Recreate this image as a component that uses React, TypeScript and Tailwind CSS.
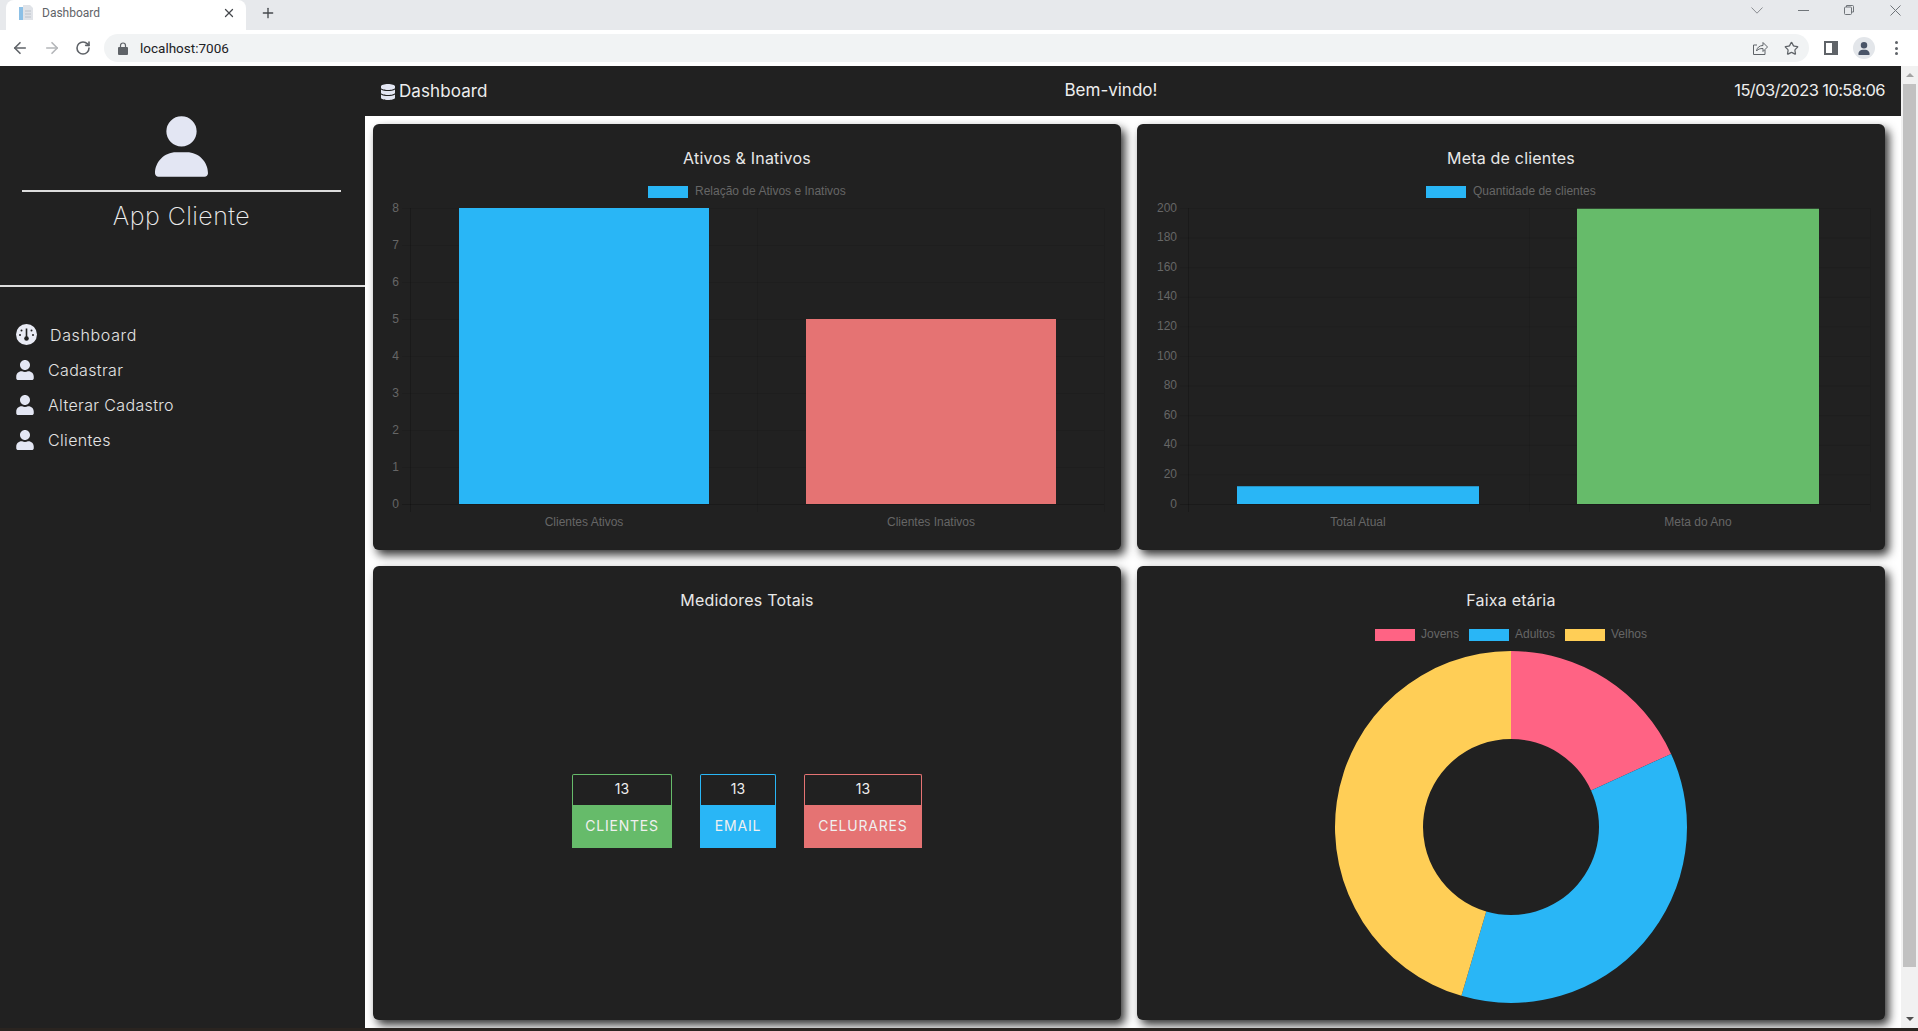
import React from 'react';
import { FaUser, FaDatabase } from 'react-icons/fa';
import { FaUser as FaUser6 } from 'react-icons/fa6';
import { ArrowLeft, ArrowRight, RotateCw, Star, X, Plus } from 'lucide-react';

const BLUE = '#29b6f6';
const RED = '#e57373';
const GREEN = '#66bb6a';
const GRID = 'rgba(0,0,0,0.08)';
const AXIS = 'rgba(0,0,0,0.2)';
const LABEL = '#666666';
const CHART_FONT = '"Liberation Sans", Arial, sans-serif';

interface BarChartProps {
  plotLeft: number;
  plotRight: number;
  ticks: number[];
  max: number;
  legend: string;
  legendX: number;
  bars: { label: string; value: number; color: string; x: number; w: number }[];
}

// same look as the chart.js bars of the app
const BarChart: React.FC<BarChartProps> = ({ plotLeft, plotRight, ticks, max, legend, legendX, bars }) => {
  const top = 32;
  const bottom = 328;
  const mid = (plotLeft + plotRight) / 2;
  const yOf = (v: number) => bottom - (v / max) * (bottom - top);

  return (
    <svg viewBox="0 0 748 374" className="block w-full h-[374px]" fontFamily={CHART_FONT} fontSize={12}>
      <rect x={legendX} y={10} width={40} height={12} fill={BLUE} />
      <text x={legendX + 47} y={19} fill={LABEL}>{legend}</text>

      {ticks.map(t => (
        <g key={t}>
          <line x1={plotLeft - 8} x2={plotRight} y1={yOf(t) + 0.5} y2={yOf(t) + 0.5} stroke={t === 0 ? AXIS : GRID} />
          <text x={plotLeft - 11} y={yOf(t) + 3.5} textAnchor="end" fill={LABEL}>{t}</text>
        </g>
      ))}
      {[plotLeft, mid, plotRight].map(x => (
        <line key={x} x1={x + 0.5} x2={x + 0.5} y1={top} y2={bottom + 8} stroke={x === plotLeft ? AXIS : GRID} />
      ))}

      {bars.map(b => (
        <g key={b.label}>
          <rect x={b.x} y={yOf(b.value)} width={b.w} height={bottom - yOf(b.value)} fill={b.color} />
          <text x={b.x + b.w / 2} y={349.5} textAnchor="middle" fill={LABEL}>{b.label}</text>
        </g>
      ))}
    </svg>
  );
};

const polar = (cx: number, cy: number, r: number, deg: number) => {
  const a = ((deg - 90) * Math.PI) / 180;
  return [cx + r * Math.cos(a), cy + r * Math.sin(a)];
};

const slicePath = (cx: number, cy: number, r1: number, r2: number, from: number, to: number) => {
  const [x1, y1] = polar(cx, cy, r2, from);
  const [x2, y2] = polar(cx, cy, r2, to);
  const [x3, y3] = polar(cx, cy, r1, to);
  const [x4, y4] = polar(cx, cy, r1, from);
  const large = to - from > 180 ? 1 : 0;
  return `M${x1} ${y1}A${r2} ${r2} 0 ${large} 1 ${x2} ${y2}L${x3} ${y3}A${r1} ${r1} 0 ${large} 0 ${x4} ${y4}Z`;
};

const AGE_GROUPS = [
  { label: 'Jovens', value: 2, color: '#ff6384', boxX: 238 },
  { label: 'Adultos', value: 4, color: '#29b6f6', boxX: 332 },
  { label: 'Velhos', value: 5, color: '#ffce56', boxX: 428 },
];

const DonutChart: React.FC = () => {
  const total = AGE_GROUPS.reduce((s, g) => s + g.value, 0);
  let angle = 0;
  return (
    <svg viewBox="0 0 748 402" className="block w-full h-[402px]" fontFamily={CHART_FONT} fontSize={12}>
      {AGE_GROUPS.map(g => (
        <g key={g.label}>
          <rect x={g.boxX} y={11} width={40} height={12} fill={g.color} />
          <text x={g.boxX + 46} y={20} fill={LABEL}>{g.label}</text>
        </g>
      ))}
      {AGE_GROUPS.map(g => {
        const from = angle;
        angle += (g.value / total) * 360;
        return <path key={g.label} d={slicePath(374, 209, 88, 176, from, angle)} fill={g.color} />;
      })}
    </svg>
  );
};

const Card: React.FC<{ title: string; children: React.ReactNode }> = ({ title, children }) => (
  <div className="flex flex-col bg-[#212121] rounded-md shadow-[4px_5px_10px_rgba(0,0,0,0.8)] overflow-hidden">
    <h2 className="h-[52px] pt-6 text-center text-[16px] leading-5 tracking-[0.2px] text-[#e8e8e8] shrink-0">{title}</h2>
    {children}
  </div>
);

const Counter: React.FC<{ label: string; width: string; border: string; bg: string }> = ({ label, width, border, bg }) => (
  <div className={`flex flex-col text-center text-[14px] ${width}`}>
    <div className={`h-[31px] leading-[28px] border border-b-0 rounded-t-[2px] ${border} text-[#eeeeee]`}>13</div>
    <div className={`h-[43px] leading-[41px] tracking-[0.8px] text-[#f0f0f0] ${bg}`}>{label}</div>
  </div>
);

const GaugeIcon: React.FC = () => (
  <svg width="21" height="21" viewBox="0 0 21 21" className="shrink-0">
    <circle cx="10.5" cy="10.5" r="10.5" fill="#e9ebf5" />
    <path d="M10.500 4.500v9" stroke="#212121" strokeWidth="1.6" />
    <circle cx="10.500" cy="14.500" r="2.300" fill="#212121" />
    <circle cx="5.500" cy="6.500" r="1" fill="#212121" />
    <circle cx="15.500" cy="6.500" r="1" fill="#212121" />
    <circle cx="4" cy="11" r="1" fill="#212121" />
    <circle cx="17" cy="11" r="1" fill="#212121" />
  </svg>
);

const NAV_ITEMS = ['Cadastrar', 'Alterar Cadastro', 'Clientes'];

const Sidebar: React.FC = () => (
  <aside className="w-[365px] shrink-0 bg-[#212121] flex flex-col">
    <div className="flex flex-col items-center pt-[50px] pr-[2px]">
      <FaUser6 className="w-[53px] h-[61px] text-[#e3e6f3]" />
      <div className="w-[319px] h-[2px] bg-[#dddddd] mt-[13px]" />
      <div className="mt-[9px] text-[25px] leading-[30px] font-extralight tracking-[0.45px] text-[#ececec]">App Cliente</div>
    </div>
    <div className="h-[2px] bg-[#dddddd] mt-[54px]" />
    <nav className="pt-[30px] text-[16px] text-[#e4e4e4] tracking-[0.35px] font-light">
      <a className="h-[35px] flex items-center pl-4">
        <GaugeIcon />
        <span className="ml-[13px] tracking-[0.65px]">Dashboard</span>
      </a>
      {NAV_ITEMS.map(item => (
        <a key={item} className="h-[35px] flex items-center pl-4">
          <FaUser className="w-[18px] h-[20px] text-[#e3e6f3]" />
          <span className="ml-[13px] pl-[1px]">{item}</span>
        </a>
      ))}
    </nav>
  </aside>
);

const BrowserChrome: React.FC = () => (
  <div className="shrink-0 font-['Roboto',sans-serif]">
    {/* Tabs */}
    <div className="h-[30px] bg-[#e7e9ec] flex pl-[6px] text-[#5f6368]">
      <div className="w-[240px] h-[30px] bg-white rounded-t-lg flex items-center pl-[13px] pr-[10px] pb-[5px]">
        <svg width="14" height="16" viewBox="0 0 14 16" className="shrink-0">
          <rect x="0" y="2" width="4" height="13" fill="#8cc0e6" />
          <path d="M4 0h7l3 3v12H4z" fill="#e0e3e8" />
          <path d="M6 6h6M6 9h6M6 12h6" stroke="#bcc2ca" strokeWidth="1" />
        </svg>
        <span className="ml-[9px] text-[12px]">Dashboard</span>
        <X className="ml-auto w-[14px] h-[14px] text-[#45484c]" strokeWidth={2.2} />
      </div>
      <Plus className="ml-[14px] mt-[5px] w-[16px] h-[16px] text-[#45484c]" strokeWidth={2} />
      <div className="ml-auto h-[20px] flex items-center">
        <svg width="12" height="7" viewBox="0 0 12 7" fill="none" stroke="#8a8d91" className="mr-[35px]">
          <path d="M.5.500 6 6.200 11.500.500" />
        </svg>
        <svg width="11" height="1" viewBox="0 0 11 1" className="mr-[35px]">
          <rect width="11" height="1" fill="#70757a" />
        </svg>
        <svg width="10" height="10" viewBox="0 0 10 10" fill="none" stroke="#70757a" className="mr-[36px]">
          <rect x="0.5" y="2" width="7" height="7.500" rx="1" />
          <path d="M2.500 2V.500h6a1 1 0 0 1 1 1v5.500H7.800" />
        </svg>
        <svg width="11" height="11" viewBox="0 0 11 11" stroke="#70757a" className="mr-[17px]">
          <path d="M.5.500l10 10M10.500.500l-10 10" />
        </svg>
      </div>
    </div>
    {/* Toolbar */}
    <div className="h-[36px] bg-white flex items-center pl-[11px] pr-[14px] text-[#5f6368]">
      <ArrowLeft className="w-[18px] h-[18px]" strokeWidth={2.2} />
      <ArrowRight className="ml-[14px] w-[18px] h-[18px] text-[#b4b6b9]" strokeWidth={2.2} />
      <RotateCw className="ml-[14px] w-[16px] h-[16px]" strokeWidth={2.4} />
      <div className="ml-[13px] w-[1705px] h-[28px] rounded-full bg-[#f1f3f4] flex items-center pl-[14px] pr-[10px]">
        <svg width="10" height="13" viewBox="0 0 10 13" fill="#5f6368">
          <path d="M1 5h8a1 1 0 0 1 1 1v6a1 1 0 0 1-1 1H1a1 1 0 0 1-1-1V6a1 1 0 0 1 1-1z" />
          <path d="M2.500 5V3.500a2.500 2.500 0 0 1 5 0V5" fill="none" stroke="#5f6368" strokeWidth="1.2" />
        </svg>
        <span className="ml-[12px] text-[13.5px] text-[#202124]">localhost:7006</span>
        <svg width="16" height="16" viewBox="0 0 16 16" fill="none" stroke="#5f6368" strokeWidth="1" className="ml-auto mr-[16px]">
          <path d="M13 10v4.500H1.500V5H5" />
          <path d="M4.500 11c.5-3.500 3-5.500 6.500-5.500V2.500l4.500 4.500-4.500 4.500V8.500c-3 0-5 .5-6.500 2.500z" />
        </svg>
        <Star className="w-[15px] h-[15px]" strokeWidth={2} />
      </div>
      <div className="ml-[15px] w-[14px] h-[14px] border-2 border-[#5f6368] flex justify-end">
        <div className="w-[4px] bg-[#5f6368]" />
      </div>
      <div className="ml-[15px] w-[22px] h-[22px] rounded-full bg-[#e3e6ea] flex items-center justify-center">
        <FaUser6 className="w-[12px] h-[13px] text-[#4a5568]" />
      </div>
      <div className="ml-[20px] flex flex-col gap-[2.5px]">
        <div className="w-[3px] h-[3px] rounded-full bg-[#5f6368]" />
        <div className="w-[3px] h-[3px] rounded-full bg-[#5f6368]" />
        <div className="w-[3px] h-[3px] rounded-full bg-[#5f6368]" />
      </div>
    </div>
  </div>
);

const Scrollbar: React.FC = () => (
  <div className="w-[17px] shrink-0 bg-[#f1f1f1] flex flex-col items-center">
    <div className="h-[18px] flex items-center justify-center">
      <div className="w-0 h-0 border-x-[4px] border-x-transparent border-b-[4px] border-b-[#a3a3a3]" />
    </div>
    <div className="w-[13px] flex-1 bg-[#c1c1c1]" />
    <div className="h-[61px] flex items-end justify-center pb-[7px]">
      <div className="w-0 h-0 border-x-[4px] border-x-transparent border-t-[4px] border-t-[#505050]" />
    </div>
  </div>
);

const App: React.FC = () => (
  <div className="w-[1918px] h-[1031px] flex flex-col overflow-hidden bg-white font-['Inter',sans-serif]">
    <BrowserChrome />
    <div className="flex-1 flex min-h-0">
      <Sidebar />
      <div className="flex-1 flex flex-col min-w-0">
        <header className="h-[50px] shrink-0 bg-[#212121] flex items-center justify-between px-4 text-[#eeeeee] text-[17px]">
          <div className="flex items-center pt-[1px]">
            <FaDatabase className="w-[14px] h-[16px] text-[#e3e6f3] mr-[4px]" />
            <span className="tracking-[0.1px]">Dashboard</span>
          </div>
          <span>Bem-vindo!</span>
          <span className="text-[16.5px] tracking-[-0.6px] pb-[1px]">15/03/2023 10:58:06</span>
        </header>
        <main className="flex-1 grid grid-cols-[748px_748px] grid-rows-[426px_454px] gap-4 p-2">
          <Card title="Ativos & Inativos">
            <BarChart
              plotLeft={37}
              plotRight={731}
              ticks={[0, 1, 2, 3, 4, 5, 6, 7, 8]}
              max={8}
              legend="Relação de Ativos e Inativos"
              legendX={275}
              bars={[
                { label: 'Clientes Ativos', value: 8, color: BLUE, x: 86, w: 250 },
                { label: 'Clientes Inativos', value: 5, color: RED, x: 433, w: 250 },
              ]}
            />
          </Card>
          <Card title="Meta de clientes">
            <BarChart
              plotLeft={51}
              plotRight={733}
              ticks={[0, 20, 40, 60, 80, 100, 120, 140, 160, 180, 200]}
              max={200}
              legend="Quantidade de clientes"
              legendX={289}
              bars={[
                { label: 'Total Atual', value: 12, color: BLUE, x: 100, w: 242 },
                { label: 'Meta do Ano', value: 199.5, color: GREEN, x: 440, w: 242 },
              ]}
            />
          </Card>
          <Card title="Medidores Totais">
            <div className="flex-1 flex items-center justify-center gap-[28px] pb-[16px]">
              <Counter label="CLIENTES" width="w-[100px]" border="border-[#66bb6a]" bg="bg-[#66bb6a]" />
              <Counter label="EMAIL" width="w-[76px]" border="border-[#29b6f6]" bg="bg-[#29b6f6]" />
              <Counter label="CELURARES" width="w-[118px]" border="border-[#e57373]" bg="bg-[#e57373]" />
            </div>
          </Card>
          <Card title="Faixa etária">
            <DonutChart />
          </Card>
        </main>
      </div>
      <Scrollbar />
    </div>
    <div className="h-[3px] shrink-0 bg-[#2a2420]" />
  </div>
);

export default App;
